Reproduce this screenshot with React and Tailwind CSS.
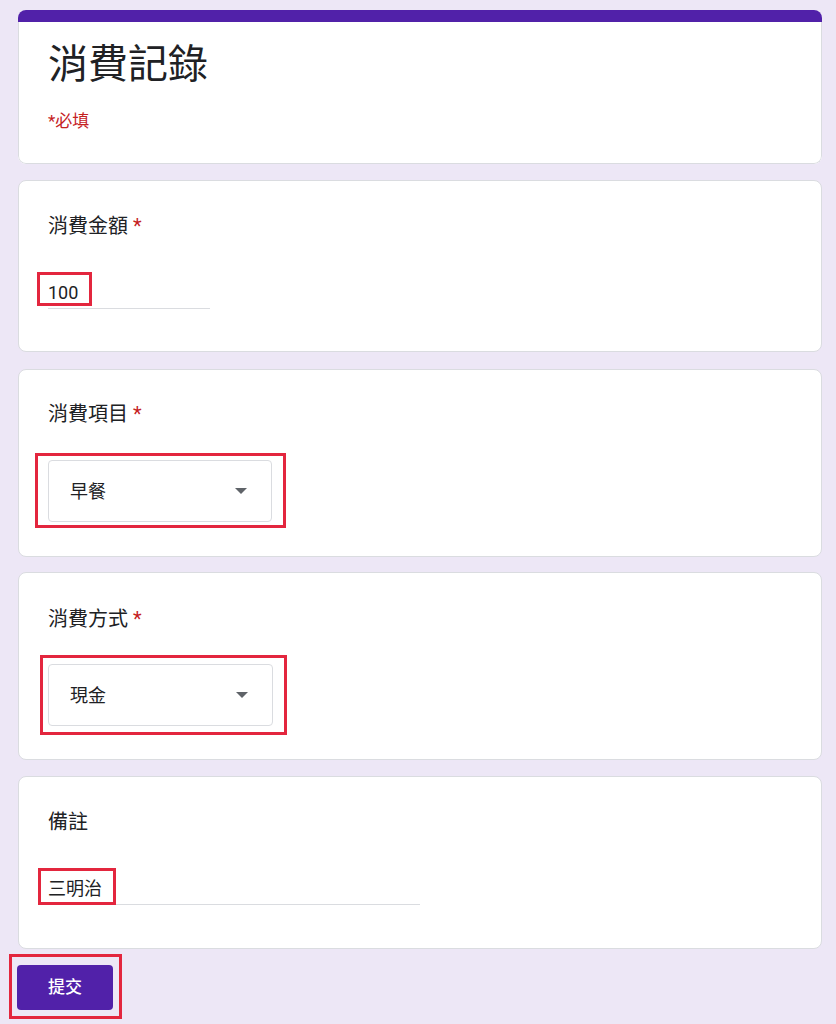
const FONT = "font-['Roboto','Noto_Sans_CJK_TC',sans-serif]";
const CARD = "bg-white border border-[#dadce0] rounded-[8px] px-[29px]";
const MARK = "absolute border-[3px] border-[#e3263e] pointer-events-none";

const Label = ({ text, required }) => (
  <div className="h-[28px] leading-[28px] text-[20px] text-[#202124]">
    {text}
    {required && <span className="text-[#c5221f]"> *</span>}
  </div>
);

const Arrow = () => (
  <svg width="12" height="6" viewBox="0 0 12 6" className="shrink-0">
    <path d="M0 0h12L6 6z" fill="#5f6368" />
  </svg>
);

const Dropdown = ({ value, width, mark }) => (
  <div className="relative" style={{ width }}>
    <div className="h-[62px] border border-[#dadce0] rounded-[4px] pl-[21px] pr-[24px] flex items-center justify-between">
      <span className="text-[18px] text-[#202124]">{value}</span>
      <Arrow />
    </div>
    <span className={MARK} style={mark} />
  </div>
);

export default function App() {
  return (
    <div className={`${FONT} min-h-[1024px] bg-[#ede7f6] pl-[18px] pr-[14px] pt-[10px] pb-[15px]`}>
      {/* header card */}
      <div className="rounded-[8px] overflow-hidden bg-white">
        <div className="h-[12px] bg-[#5121a9]" />
        <div className="border-x border-b border-[#dadce0] rounded-b-[8px] px-[29px] pt-[19px] pb-[30px]">
          <h1 className="text-[40px] leading-[48px] text-[#202124]">消費記錄</h1>
          <div className="mt-[20px] text-[17px] leading-[24px] text-[#c5221f]">*必填</div>
        </div>
      </div>

      {/* amount */}
      <div className={`${CARD} mt-[16px] pt-[31px] pb-[42px]`}>
        <Label text="消費金額" required />
        <div className="mt-[38px] w-[162px] border-b border-[#dadce0] leading-[30px] text-[18px] text-[#202124]">
          <span className="relative inline-block">
            100
            <span className={`${MARK} left-[-11px] top-[-6px] w-[55px] h-[34px]`} />
          </span>
        </div>
      </div>

      {/* item */}
      <div className={`${CARD} mt-[17px] pt-[30px] pb-[34px]`}>
        <Label text="消費項目" required />
        <div className="mt-[32px]">
          <Dropdown
            value="早餐"
            width={224}
            mark={{ left: -13, top: -7, width: 251, height: 75 }}
          />
        </div>
      </div>

      {/* payment */}
      <div className={`${CARD} mt-[15px] pt-[32px] pb-[33px]`}>
        <Label text="消費方式" required />
        <div className="mt-[31px]">
          <Dropdown
            value="現金"
            width={225}
            mark={{ left: -8, top: -9, width: 247, height: 80 }}
          />
        </div>
      </div>

      {/* note */}
      <div className={`${CARD} mt-[16px] pt-[31px] pb-[43px]`}>
        <Label text="備註" />
        <div className="mt-[38px] w-[372px] border-b border-[#dadce0] leading-[30px] text-[18px] text-[#202124]">
          <span className="relative inline-block">
            三明治
            <span className={`${MARK} left-[-10px] top-[-6px] w-[78px] h-[37px]`} />
          </span>
        </div>
      </div>

      {/* submit */}
      <div className="relative mt-[16px] ml-[-1px] w-[96px]">
        <button className="w-[96px] h-[45px] rounded-[4px] bg-[#5121a9] text-white text-[17px] font-medium">
          提交
        </button>
        <span className={`${MARK} left-[-8px] top-[-11px] w-[113px] h-[65px]`} />
      </div>
    </div>
  );
}
